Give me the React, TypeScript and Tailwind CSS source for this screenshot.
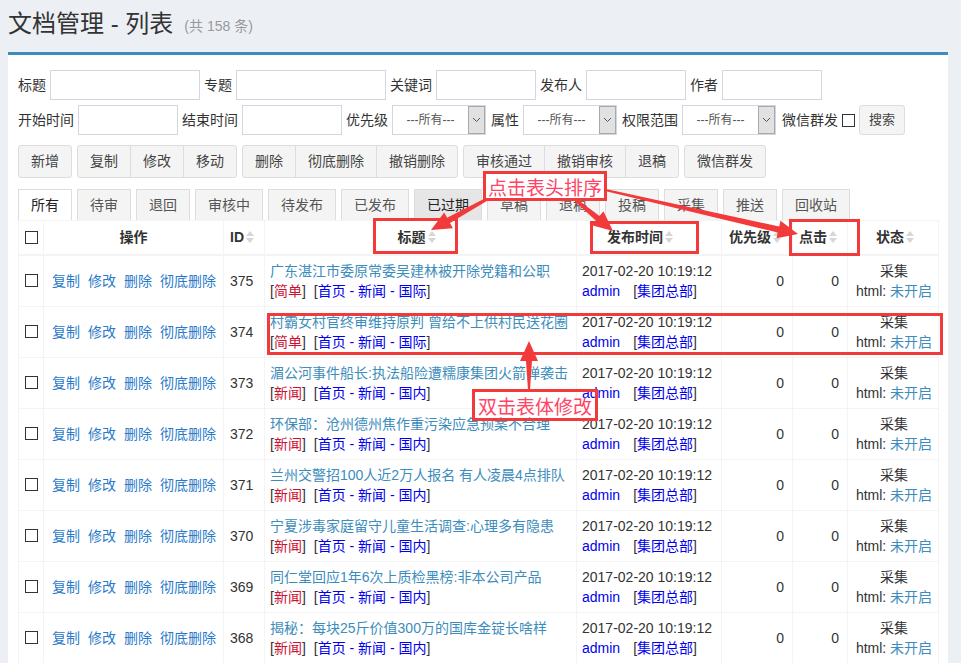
import React from "react";

const FONT = { fontFamily: '"Liberation Sans", "Noto Sans CJK SC", Arial, sans-serif' };

type Row = {
  id: number;
  title: string;
  tag: string;
  path: string;
};

const rows: Row[] = [
  { id: 375, title: "广东湛江市委原常委吴建林被开除党籍和公职", tag: "简单", path: "国际" },
  { id: 374, title: "村霸女村官终审维持原判 曾给不上供村民送花圈", tag: "简单", path: "国际" },
  { id: 373, title: "湄公河事件船长:执法船险遭糯康集团火箭弹袭击", tag: "新闻", path: "国内" },
  { id: 372, title: "环保部：沧州德州焦作重污染应急预案不合理", tag: "新闻", path: "国内" },
  { id: 371, title: "兰州交警招100人近2万人报名 有人凌晨4点排队", tag: "新闻", path: "国内" },
  { id: 370, title: "宁夏涉毒家庭留守儿童生活调查:心理多有隐患", tag: "新闻", path: "国内" },
  { id: 369, title: "同仁堂回应1年6次上质检黑榜:非本公司产品", tag: "新闻", path: "国内" },
  { id: 368, title: "揭秘：每块25斤价值300万的国库金锭长啥样", tag: "新闻", path: "国内" },
];

const tabs = ["所有", "待审", "退回", "审核中", "待发布", "已发布", "已过期", "草稿", "退稿", "投稿", "采集", "推送", "回收站"];

function TextInput({ w }: { w: string }) {
  return <input className={`h-[30px] border border-[#d2d6de] bg-white ${w}`} />;
}

function Select() {
  return (
    <div className="flex h-[30px] w-[94px] border border-[#d2d6de] bg-white">
      <div className="flex flex-1 items-center justify-center text-[12px] text-[#555]">---所有---</div>
      <div className="flex w-[17px] items-center justify-center border border-[#a9a9a9] bg-[#e1e1e1]">
        <svg width="9" height="6" viewBox="0 0 9 6">
          <path d="M1 1 L4.5 4.5 L8 1" fill="none" stroke="#555" strokeWidth="1" />
        </svg>
      </div>
    </div>
  );
}

function Checkbox() {
  return <span className="inline-block h-[13px] w-[13px] border border-[#333] bg-white" />;
}

function SortIcon() {
  return (
    <svg width="8" height="14" viewBox="0 0 8 14" className="ml-[2px] inline-block align-[-2px]">
      <polygon points="0,6 4,1 8,6" fill="#d6d6d6" />
      <polygon points="0,8 8,8 4,13" fill="#d6d6d6" />
    </svg>
  );
}

function BtnGroup({ items }: { items: string[] }) {
  return (
    <div className="flex">
      {items.map((b, i) => (
        <button
          key={b}
          className={`h-[33px] border border-[#ddd] bg-[#f4f4f4] px-[12px] text-[14px] text-[#444] ${i > 0 ? "-ml-px" : ""} ${i === 0 ? "rounded-l-[3px]" : ""} ${i === items.length - 1 ? "rounded-r-[3px]" : ""}`}
        >
          {b}
        </button>
      ))}
    </div>
  );
}

function arrow(x1: number, y1: number, x2: number, y2: number, headLen = 20, headW = 18, shaft = 6) {
  const len = Math.hypot(x2 - x1, y2 - y1);
  const dx = (x2 - x1) / len;
  const dy = (y2 - y1) / len;
  const nx = -dy;
  const ny = dx;
  const bx = x2 - dx * headLen;
  const by = y2 - dy * headLen;
  const pts = [
    [x1 + nx * 1, y1 + ny * 1],
    [bx + nx * (shaft / 2), by + ny * (shaft / 2)],
    [bx + nx * (headW / 2), by + ny * (headW / 2)],
    [x2, y2],
    [bx - nx * (headW / 2), by - ny * (headW / 2)],
    [bx - nx * (shaft / 2), by - ny * (shaft / 2)],
    [x1 - nx * 1, y1 - ny * 1],
  ];
  return pts.map((p) => `${p[0].toFixed(1)},${p[1].toFixed(1)}`).join(" ");
}

function Annotations() {
  const red = "#f23a3a";
  return (
    <>
      <svg className="pointer-events-none absolute left-0 top-0" width="961" height="663">
        <rect x="374.5" y="219.5" width="82" height="33" fill="none" stroke={red} strokeWidth="3" />
        <rect x="591.5" y="222.5" width="106" height="30" fill="none" stroke={red} strokeWidth="3" />
        <rect x="790.5" y="220.5" width="68" height="34" fill="none" stroke={red} strokeWidth="3" />
        <rect x="268.5" y="314.5" width="673" height="39" fill="none" stroke={red} strokeWidth="3" />
        <polygon points={arrow(498, 193, 431, 230)} fill={red} />
        <polygon points={arrow(566, 192, 613, 231)} fill={red} />
        <polygon points={arrow(601, 189, 798, 234)} fill={red} />
        <polygon points={arrow(529, 390, 529, 341)} fill={red} />
      </svg>
      <div
        className="pointer-events-none absolute left-[483px] top-[171px] flex h-[30px] w-[124px] items-center justify-center border-[3px] border-[#f23a3a] bg-white text-[19px] leading-none text-[#ff4466]"
        style={{ fontFamily: '"Noto Sans CJK SC", sans-serif' }}
      >
        点击表头排序
      </div>
      <div
        className="pointer-events-none absolute left-[472px] top-[389px] flex h-[32px] w-[126px] items-center justify-center border-[3px] border-[#f23a3a] text-[19px] leading-none text-[#ff4466]"
        style={{ fontFamily: '"Noto Sans CJK SC", sans-serif' }}
      >
        双击表体修改
      </div>
    </>
  );
}

export default function App() {
  return (
    <div className="relative min-h-[663px] w-[961px] bg-[#ecf0f5] text-[14px] text-[#333]" style={FONT}>
      <div className="px-[8px] pt-[9px]">
        <h1 className="mb-[13px] flex h-[30px] items-center text-[24px] leading-[30px] text-[#333]">
          文档管理 - 列表
          <small className="ml-[11px] mt-[3px] text-[14px] leading-[20px] text-[#999]">(共 158 条)</small>
        </h1>

        <div className="w-[940px] border-t-[3px] border-[#3c8dbc] bg-white px-[10px] pt-[15px] pb-[10px]">
          {/* search form */}
          <div className="flex h-[30px] items-center gap-[4px] leading-[20px]">
            <span>标题</span>
            <TextInput w="w-[150px]" />
            <span>专题</span>
            <TextInput w="w-[150px]" />
            <span>关键词</span>
            <TextInput w="w-[100px]" />
            <span>发布人</span>
            <TextInput w="w-[100px]" />
            <span>作者</span>
            <TextInput w="w-[100px]" />
          </div>
          <div className="mt-[5px] flex h-[30px] items-center gap-[4px] leading-[20px]">
            <span>开始时间</span>
            <TextInput w="w-[100px]" />
            <span>结束时间</span>
            <TextInput w="w-[100px]" />
            <span>优先级</span>
            <Select />
            <span className="ml-[1px]">属性</span>
            <Select />
            <span className="ml-[1px]">权限范围</span>
            <Select />
            <span className="ml-[2px]">微信群发</span>
            <Checkbox />
            <button className="h-[30px] rounded-[3px] border border-[#ddd] bg-[#f4f4f4] px-[9px] text-[13px] text-[#444]">
              搜索
            </button>
          </div>

          {/* toolbar */}
          <div className="mt-[10px] flex gap-[5px]">
            <BtnGroup items={["新增"]} />
            <BtnGroup items={["复制", "修改", "移动"]} />
            <BtnGroup items={["删除", "彻底删除", "撤销删除"]} />
            <BtnGroup items={["审核通过", "撤销审核", "退稿"]} />
            <BtnGroup items={["微信群发"]} />
          </div>

          {/* tabs */}
          <div className="mt-[11px] flex gap-[5px]">
            {tabs.map((t, i) => (
              <div
                key={t}
                className={`flex h-[31px] items-center border border-b-0 border-[#ddd] px-[12px] text-[14px] ${
                  i === 0 ? "bg-white text-[#222]" : i === 6 ? "bg-[#e6e6e6] text-[#222]" : "bg-[#f4f4f4] text-[#555]"
                }`}
              >
                {t}
              </div>
            ))}
          </div>

          {/* table */}
          <table className="w-[920px] table-fixed border-collapse leading-[20px]">
            <colgroup>
              <col className="w-[25px]" />
              <col className="w-[180px]" />
              <col className="w-[41px]" />
              <col className="w-[312px]" />
              <col className="w-[145px]" />
              <col className="w-[71px]" />
              <col className="w-[55px]" />
              <col className="w-[91px]" />
            </colgroup>
            <thead>
              <tr className="h-[34px] font-bold">
                <th className="border border-b-2 border-[#f4f4f4] text-center">
                  <span className="flex justify-center"><Checkbox /></span>
                </th>
                <th className="border border-b-2 border-[#f4f4f4] text-center">操作</th>
                <th className="border border-b-2 border-[#f4f4f4] pl-[6px] text-left">ID<SortIcon /></th>
                <th className="border border-b-2 border-[#f4f4f4] pr-[8px] text-center">标题<SortIcon /></th>
                <th className="border border-b-2 border-[#f4f4f4] pr-[18px] text-center">发布时间<SortIcon /></th>
                <th className="border border-b-2 border-[#f4f4f4] pl-[7px] text-left">优先级<SortIcon /></th>
                <th className="border border-b-2 border-[#f4f4f4] pl-[6px] text-left">点击<SortIcon /></th>
                <th className="border border-b-2 border-[#f4f4f4] pl-[4px] text-center">状态<SortIcon /></th>
              </tr>
            </thead>
            <tbody>
              {rows.map((r) => (
                <tr key={r.id} className="h-[51px]">
                  <td className="border border-[#f4f4f4] text-center align-middle">
                    <span className="flex justify-center"><Checkbox /></span>
                  </td>
                  <td className="whitespace-nowrap border border-[#f4f4f4] pl-[8px] align-middle text-[#2a7acb]">
                    <span className="mr-[8px]">复制</span>
                    <span className="mr-[8px]">修改</span>
                    <span className="mr-[8px]">删除</span>
                    <span>彻底删除</span>
                  </td>
                  <td className="border border-[#f4f4f4] pl-[6px] align-middle">{r.id}</td>
                  <td className="whitespace-nowrap border border-[#f4f4f4] py-[5px] pl-[5px] align-top">
                    <div className="text-[#3c8dbc]">{r.title}</div>
                    <div>
                      [<span className="text-[#cc1133]">{r.tag}</span>]
                      <span className="ml-[8px]">
                        [<span className="text-[#0000ee]">首页 - 新闻 - {r.path}</span>]
                      </span>
                    </div>
                  </td>
                  <td className="whitespace-nowrap border border-[#f4f4f4] py-[5px] pl-[5px] align-top">
                    <div>2017-02-20 10:19:12</div>
                    <div>
                      <span className="text-[#0000ee]">admin</span>
                      <span className="ml-[13px]">
                        [<span className="text-[#0000ee]">集团总部</span>]
                      </span>
                    </div>
                  </td>
                  <td className="border border-[#f4f4f4] pr-[8px] text-right align-middle">0</td>
                  <td className="border border-[#f4f4f4] pr-[8px] text-right align-middle">0</td>
                  <td className="whitespace-nowrap border border-[#f4f4f4] py-[5px] pl-[2px] text-center align-top">
                    <div>采集</div>
                    <div>
                      html: <span className="text-[#3c8dbc]">未开启</span>
                    </div>
                  </td>
                </tr>
              ))}
            </tbody>
          </table>
        </div>
      </div>
      <Annotations />
    </div>
  );
}
